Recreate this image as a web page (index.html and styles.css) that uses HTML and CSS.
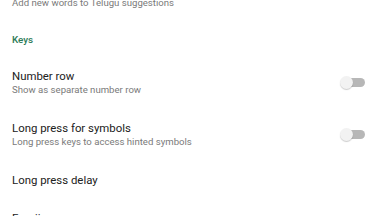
FILE: index.html
```html
<!DOCTYPE html>
<html lang="en">
<head>
    <meta charset="UTF-8">
    <meta name="viewport" content="width=device-width, initial-scale=1.0">
    <title>Keyboard settings</title>
    <link rel="stylesheet" href="styles.css">
</head>
<body>
    <div class="settings">
        <div class="pref">
            <div class="pref-text">
                <div class="pref-title">Add to dictionary</div>
                <div class="pref-summary">Add new words to Telugu suggestions</div>
            </div>
        </div>

        <div class="category">Keys</div>

        <div class="pref">
            <div class="pref-text">
                <div class="pref-title">Number row</div>
                <div class="pref-summary">Show as separate number row</div>
            </div>
            <span class="switch"><span class="thumb"></span></span>
        </div>

        <div class="pref">
            <div class="pref-text">
                <div class="pref-title">Long press for symbols</div>
                <div class="pref-summary">Long press keys to access hinted symbols</div>
            </div>
            <span class="switch"><span class="thumb"></span></span>
        </div>

        <div class="pref">
            <div class="pref-text">
                <div class="pref-title">Long press delay</div>
            </div>
        </div>

        <div class="pref">
            <div class="pref-text">
                <div class="pref-title">Emoji row</div>
            </div>
        </div>
    </div>
</body>
</html>
```

FILE: styles.css
```css
html, body {
    margin: 0;
    padding: 0;
    background: #ffffff;
    overflow: hidden;
}
body {
    font-family: Roboto, "Noto Sans", Arial, sans-serif;
    width: 384px;
    height: 216px;
}
.settings {
    margin-top: -30px;
}
.pref {
    display: flex;
    align-items: center;
    padding: 12px 19px 12px 12px;
}
.pref-text {
    flex: 1;
    min-width: 0;
}
.pref-title {
    font-size: 11.4px;
    line-height: 14px;
    color: #212121;
}
.pref-summary {
    font-size: 9.6px;
    line-height: 14px;
    color: #7a7a7a;
    white-space: nowrap;
}
.category {
    padding: 11px 12px 10px;
    font-size: 9.8px;
    line-height: 14px;
    font-weight: 500;
    color: #2b7a56;
}
.switch {
    position: relative;
    width: 24px;
    height: 9px;
    border-radius: 5px;
    background: #b7b7b7;
    margin-top: -2px;
}
.thumb {
    position: absolute;
    left: -1px;
    top: -2px;
    width: 13px;
    height: 13px;
    border-radius: 50%;
    background: #f2f2f2;
    box-shadow: 0 1px 1px rgba(0,0,0,0.2);
}
```
